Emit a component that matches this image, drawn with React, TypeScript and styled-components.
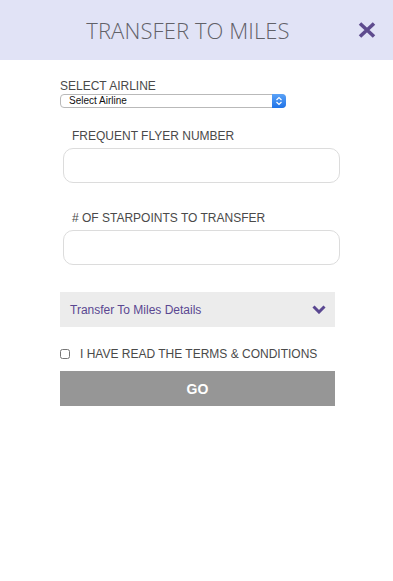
import React from 'react';
import styled, { createGlobalStyle } from 'styled-components';

const GlobalStyle = createGlobalStyle`
  html, body {
    margin: 0;
    padding: 0;
    background: #fff;
    font-family: "Liberation Sans", Arial, sans-serif;
  }
`;

const Page = styled.div`
  width: 393px;
  min-height: 581px;
  background: #fff;
`;

const Header = styled.header`
  height: 60px;
  background-color: #e1e3f6;
  display: flex;
  align-items: center;
  justify-content: center;
  position: relative;
`;

const Title = styled.h1`
  margin: 0;
  font-family: "Open Sans", "Liberation Sans", sans-serif;
  font-weight: 300;
  font-size: 22px;
  letter-spacing: 0.1px;
  color: #616168;
  margin-left: -17px;
`;

const CloseButton = styled.button`
  position: absolute;
  right: 17px;
  top: 22px;
  width: 18px;
  height: 16px;
  padding: 0;
  border: none;
  background: transparent;
  cursor: pointer;
  display: flex;
`;

const Form = styled.form`
  padding: 19px 58px 0 60px;
  display: flex;
  flex-direction: column;
`;

const TopLabel = styled.label`
  display: block;
  font-size: 12px;
  color: #4a4a4a;
  line-height: 14px;
`;

const SelectWrap = styled.div`
  position: relative;
  width: 226px;
  height: 14px;
  margin-top: 1px;
`;

const Select = styled.select`
  display: block;
  appearance: none;
  width: 100%;
  height: 14px;
  margin: 0;
  border: 1px solid #b9b9b9;
  border-radius: 4px;
  background: #fff;
  font-family: "Liberation Sans", Arial, sans-serif;
  font-size: 10px;
  line-height: 12px;
  color: #111;
  padding: 0 0 0 8px;
  box-sizing: border-box;
  outline: none;
`;

const Stepper = styled.span`
  position: absolute;
  right: 0;
  top: 0;
  width: 14px;
  height: 14px;
  border-radius: 0 4px 4px 0;
  background: linear-gradient(#5aa2f7, #1f73e8);
  display: flex;
  align-items: center;
  justify-content: center;
  pointer-events: none;
`;

const Field = styled.div<{ $top: number }>`
  padding: 0 3px;
  margin-top: ${(p) => p.$top}px;
`;

const FieldLabel = styled.label`
  display: block;
  padding-left: 9px;
  font-size: 12px;
  color: #4a4a4a;
  line-height: 14px;
  margin-bottom: 5px;
`;

const TextInput = styled.input`
  display: block;
  width: 277px;
  height: 35px;
  box-sizing: border-box;
  border: 1px solid #dcdcdc;
  border-radius: 10px;
  padding: 0 12px;
  font-size: 13px;
  outline: none;
`;

const Accordion = styled.button`
  margin-top: 27px;
  width: 275px;
  height: 35px;
  border: none;
  background: #ececec;
  display: flex;
  align-items: center;
  justify-content: space-between;
  padding: 0 9px 0 10px;
  font-family: "Liberation Sans", Arial, sans-serif;
  font-size: 12px;
  color: #5a4791;
  cursor: pointer;
`;

const CheckRow = styled.label`
  display: flex;
  align-items: center;
  margin-top: 20px;
  font-size: 12px;
  color: #4a4a4a;
  line-height: 14px;
`;

const CheckBox = styled.input`
  margin: 0 10px 0 0;
  width: 10px;
  height: 10px;
`;

const GoButton = styled.button`
  margin-top: 10px;
  width: 275px;
  height: 35px;
  border: none;
  background: #969696;
  color: #fff;
  font-family: "Liberation Sans", Arial, sans-serif;
  font-weight: 700;
  font-size: 14px;
  cursor: pointer;
`;

export default function App() {
  return (
    <Page>
      <GlobalStyle />
      <Header>
        <Title>TRANSFER TO MILES</Title>
        <CloseButton aria-label="Close">
          <svg width="18" height="16" viewBox="0 0 18 16">
            <path d="M2 1.5 L16 14.5 M16 1.5 L2 14.5" stroke="#5e4b8e" strokeWidth="3.6" strokeLinecap="butt" />
          </svg>
        </CloseButton>
      </Header>
      <Form onSubmit={(e) => e.preventDefault()}>
        <TopLabel htmlFor="airline">SELECT AIRLINE</TopLabel>
        <SelectWrap>
          <Select id="airline" defaultValue="">
            <option value="">Select Airline</option>
          </Select>
          <Stepper>
            <svg width="8" height="10" viewBox="0 0 8 10">
              <path d="M1.5 4 L4 1.5 L6.5 4 M1.5 6 L4 8.5 L6.5 6" stroke="#fff" strokeWidth="1.2" fill="none" />
            </svg>
          </Stepper>
        </SelectWrap>
        <Field $top={21}>
          <FieldLabel htmlFor="ffn">FREQUENT FLYER NUMBER</FieldLabel>
          <TextInput id="ffn" type="text" />
        </Field>
        <Field $top={28}>
          <FieldLabel htmlFor="points"># OF STARPOINTS TO TRANSFER</FieldLabel>
          <TextInput id="points" type="text" />
        </Field>
        <Accordion type="button">
          <span>Transfer To Miles Details</span>
          <svg width="14" height="9" viewBox="0 0 14 9">
            <path d="M1.5 1.5 L7 7 L12.5 1.5" stroke="#5a4791" strokeWidth="3" fill="none" />
          </svg>
        </Accordion>
        <CheckRow>
          <CheckBox type="checkbox" />
          I HAVE READ THE TERMS &amp; CONDITIONS
        </CheckRow>
        <GoButton type="submit">GO</GoButton>
      </Form>
    </Page>
  );
}
